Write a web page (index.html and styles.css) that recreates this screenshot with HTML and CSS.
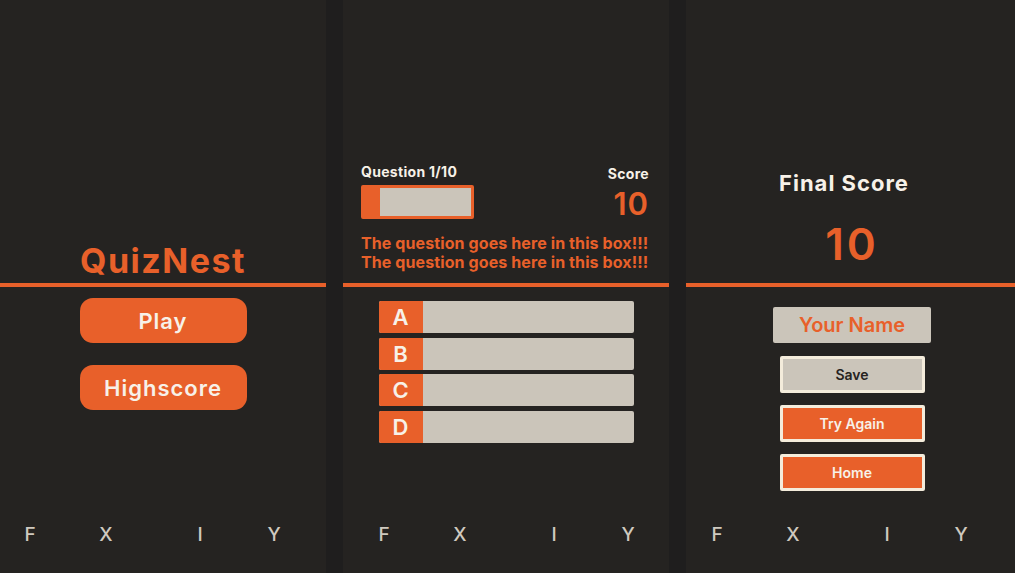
FILE: index.html
```html
<!DOCTYPE html>
<html lang="en">
<head>
    <meta charset="UTF-8">
    <meta name="viewport" content="width=device-width, initial-scale=1.0">
    <title>QuizNest</title>
    <link rel="stylesheet" href="styles.css">
</head>
<body>
    <div class="screens">
        <!-- Start screen -->
        <section class="panel panel-start">
            <div class="panel-top start-top">
                <h1 class="logo">QuizNest</h1>
            </div>
            <div class="panel-body start-body">
                <button class="pill-button">Play</button>
                <button class="pill-button">Highscore</button>
            </div>
            <div class="footer">
                <span>F</span><span>X</span><span>I</span><span>Y</span>
            </div>
        </section>

        <!-- Question screen -->
        <section class="panel panel-quiz">
            <div class="panel-top quiz-top">
                <div class="quiz-header">
                    <div class="progress-block">
                        <div class="label">Question 1/10</div>
                        <div class="progress">
                            <div class="progress-fill"></div>
                        </div>
                    </div>
                    <div class="score-block">
                        <div class="label">Score</div>
                        <div class="score-value">10</div>
                    </div>
                </div>
                <p class="question">The question goes here in this box!!!<br>The question goes here in this box!!!</p>
            </div>
            <div class="panel-body quiz-body">
                <div class="answer"><span class="answer-key">A</span></div>
                <div class="answer"><span class="answer-key">B</span></div>
                <div class="answer"><span class="answer-key">C</span></div>
                <div class="answer"><span class="answer-key">D</span></div>
            </div>
            <div class="footer">
                <span>F</span><span>X</span><span>I</span><span>Y</span>
            </div>
        </section>

        <!-- Result screen -->
        <section class="panel panel-result">
            <div class="panel-top result-top">
                <h2 class="final-title">Final Score</h2>
                <div class="final-value">10</div>
            </div>
            <div class="panel-body result-body">
                <div class="name-field">Your Name</div>
                <button class="box-button save">Save</button>
                <button class="box-button">Try Again</button>
                <button class="box-button">Home</button>
            </div>
            <div class="footer">
                <span>F</span><span>X</span><span>I</span><span>Y</span>
            </div>
        </section>
    </div>
</body>
</html>
```

FILE: styles.css
```css
body {
    margin: 0;
    padding: 0;
    background-color: #1f1e1e;
    font-family: Inter, "Noto Sans", sans-serif;
}

.screens {
    display: grid;
    grid-template-columns: 326px 326px 1fr;
    column-gap: 17px;
    height: 573px;
}

.panel {
    background-color: #252321;
    display: flex;
    flex-direction: column;
    height: 573px;
}

/* top part ends on the orange line */
.panel-top {
    height: 287px;
    box-sizing: border-box;
    border-bottom: 4px solid #e8602a;
    display: flex;
    flex-direction: column;
    justify-content: flex-end;
}

.panel-body {
    flex: 1;
    display: flex;
    flex-direction: column;
    align-items: center;
}

/* start screen */
.start-top {
    padding-bottom: 2px;
}

.logo {
    margin: 0;
    text-align: center;
    color: #e8602a;
    font-size: 34px;
    font-weight: 700;
    line-height: 41px;
    letter-spacing: 1.5px;
}

.start-body {
    padding-top: 11px;
    gap: 22px;
}

.pill-button {
    width: 167px;
    height: 45px;
    border: none;
    border-radius: 13px;
    background-color: #e8602a;
    color: #f7f1e8;
    font-family: inherit;
    font-size: 22px;
    font-weight: 600;
    letter-spacing: 1px;
    cursor: pointer;
}

/* question screen */
.quiz-top {
    padding: 0 20px 11px 18px;
}

.quiz-header {
    display: flex;
    justify-content: space-between;
    align-items: flex-start;
}

.label {
    color: #f7f1e8;
    font-size: 14px;
    font-weight: 700;
    line-height: 17px;
    letter-spacing: 0.3px;
}

.progress {
    margin-top: 5px;
    width: 113px;
    height: 34px;
    box-sizing: border-box;
    border: 3px solid #e8602a;
    border-radius: 2px;
    background-color: #cbc5ba;
}

.progress-fill {
    width: 16px;
    height: 100%;
    background-color: #e8602a;
}

.score-block {
    margin-top: 2px;
    text-align: right;
}

.score-value {
    margin-top: 4px;
    color: #e8602a;
    font-size: 31px;
    font-weight: 600;
    line-height: 36px;
    letter-spacing: 1px;
}

.question {
    margin: 12px 0 0;
    color: #e8602a;
    font-size: 16px;
    font-weight: 700;
    line-height: 19px;
    letter-spacing: 0.1px;
    white-space: nowrap;
}

.quiz-body {
    padding-top: 14px;
    gap: 4.5px;
}

.answer {
    width: 255px;
    height: 32px;
    display: flex;
    background-color: #cbc5ba;
    border-radius: 2px;
    overflow: hidden;
}

.answer-key {
    width: 44px;
    display: flex;
    align-items: center;
    justify-content: center;
    background-color: #e8602a;
    color: #f7f1e8;
    font-size: 22px;
    font-weight: 600;
}

/* result screen */
.result-top {
    align-items: center;
    padding-bottom: 13px;
}

.final-title {
    margin: 0 13px 0 0;
    color: #f7f1e8;
    font-size: 22px;
    font-weight: 700;
    line-height: 26px;
    letter-spacing: 1px;
}

.final-value {
    margin-top: 22px;
    color: #e8602a;
    font-size: 44px;
    font-weight: 600;
    line-height: 52px;
    letter-spacing: 3px;
    padding-left: 3px;
}

.result-body {
    padding-top: 20px;
    padding-left: 3px;
}

.name-field {
    width: 158px;
    height: 36px;
    display: flex;
    align-items: center;
    justify-content: center;
    background-color: #cbc5ba;
    border-radius: 2px;
    color: #e8602a;
    font-size: 20px;
    font-weight: 600;
    margin-bottom: 13px;
}

.box-button {
    width: 145px;
    height: 37px;
    margin-bottom: 12px;
    border: 3px solid #f4ecdb;
    border-radius: 2px;
    background-color: #e8602a;
    color: #f7f1e8;
    font-family: inherit;
    font-size: 14px;
    font-weight: 600;
    cursor: pointer;
}

.box-button.save {
    background-color: #cbc5ba;
    color: #262321;
}

/* bottom icon row */
.footer {
    display: flex;
    padding: 0 0 26px 20px;
    color: #cfc9bf;
    font-size: 19px;
    font-weight: 500;
    line-height: 24px;
}

.footer span {
    width: 20px;
    text-align: center;
}

.footer span:nth-child(2) {
    margin-left: 56px;
}

.footer span:nth-child(3) {
    margin-left: 74px;
}

.footer span:nth-child(4) {
    margin-left: 54px;
}

.panel-quiz .footer {
    padding-left: 31px;
}

.panel-result .footer {
    padding-left: 21px;
}
```
